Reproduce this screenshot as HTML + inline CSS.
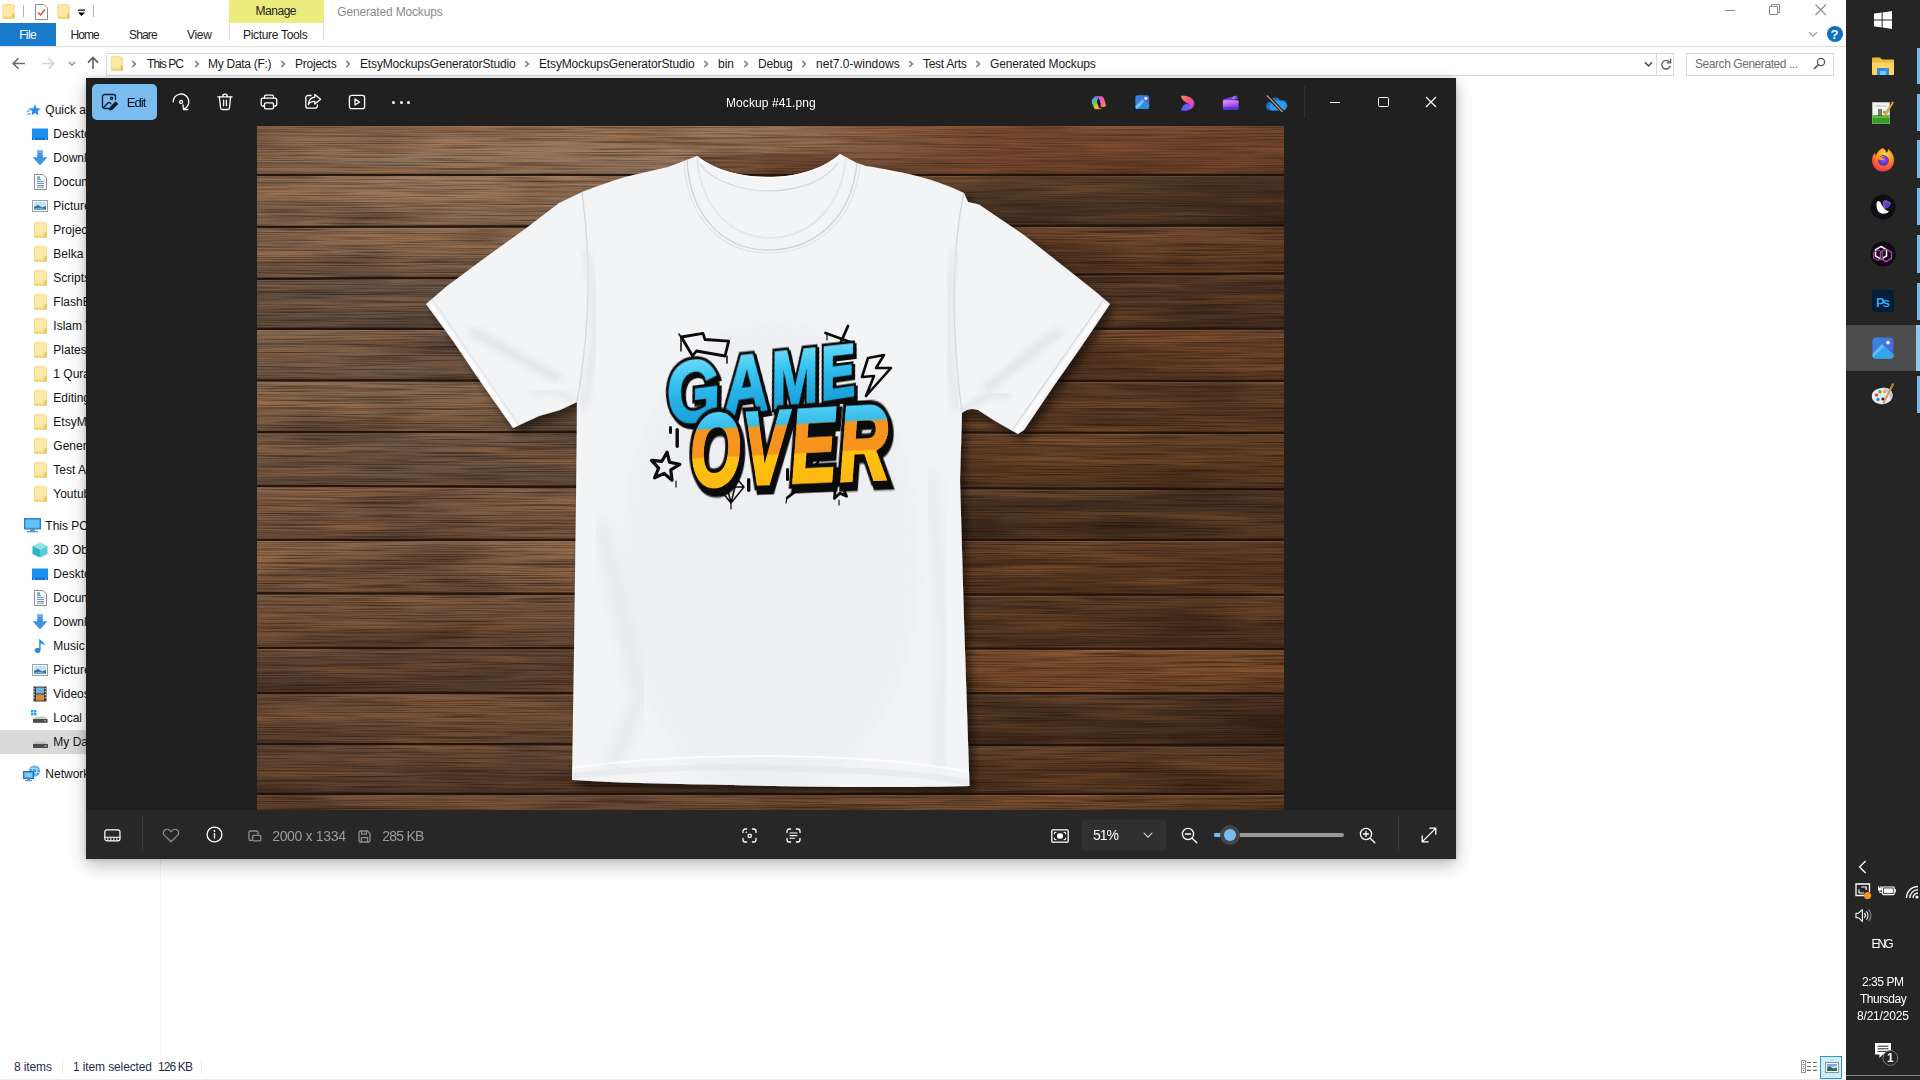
<!DOCTYPE html>
<html><head><meta charset="utf-8"><title>Mockup #41.png</title><style>html,body{margin:0;padding:0;width:1920px;height:1080px;overflow:hidden;background:#fff;font-family:"Liberation Sans",sans-serif;font-size:12px}
.abs{position:absolute}
.t{position:absolute;white-space:pre;font-family:"Liberation Sans",sans-serif}
svg{overflow:visible}</style></head><body>
<div class="abs" style="left:0;top:0;width:1846px;height:1080px;background:#fff"></div>
<svg class="abs" style="left:2px;top:4px" width="14" height="15" viewBox="0 0 14 16"><path d="M0.5,1 L8.5,0.5 L12.5,1.5 L12.5,15.5 L0.5,15.5 Z" fill="#ffe9a6" stroke="#f0cf73" stroke-width="0.8"/><rect x="1" y="13.2" width="11" height="2" fill="#f6d67d"/><rect x="10.2" y="10.2" width="2.6" height="5.3" fill="#e9c462"/></svg>
<div class="abs" style="left:23px;top:5px;width:1px;height:12px;background:#b4b4b4"></div>
<svg class="abs" style="left:35px;top:4px" width="13" height="16" viewBox="0 0 13 16"><path d="M0.5,0.5 H9 L12.5,4 V15.5 H0.5 Z" fill="#fff" stroke="#8c8c8c"/><path d="M3,8.5 L5.5,11 L10,5.5" stroke="#d9532c" stroke-width="1.5" fill="none"/></svg>
<svg class="abs" style="left:57px;top:4px" width="14" height="15" viewBox="0 0 14 16"><path d="M0.5,1 L8.5,0.5 L12.5,1.5 L12.5,15.5 L0.5,15.5 Z" fill="#ffe9a6" stroke="#f0cf73" stroke-width="0.8"/><rect x="1" y="13.2" width="11" height="2" fill="#f6d67d"/><rect x="10.2" y="10.2" width="2.6" height="5.3" fill="#e9c462"/></svg>
<svg class="abs" style="left:77px;top:9px" width="9" height="8" viewBox="0 0 9 8"><rect x="1" y="0.5" width="7" height="1.2" fill="#000"/><path d="M1,3.5 H8 L4.5,7Z" fill="#000"/></svg>
<div class="abs" style="left:93px;top:5px;width:1px;height:12px;background:#b4b4b4"></div>
<div class="abs" style="left:229px;top:0;width:95px;height:23px;background:#ecec7e"></div>
<div class="abs" style="left:229px;top:23px;width:1px;height:18px;background:#dadada"></div><div class="abs" style="left:323px;top:23px;width:1px;height:18px;background:#dadada"></div>
<span class="t" style="left:255.6px;top:5.2px;font-size:12px;line-height:12px;color:#222;letter-spacing:-0.493px;">Manage</span>
<span class="t" style="left:337.3px;top:5.5px;font-size:12px;line-height:12px;color:#8b8b8b;letter-spacing:-0.166px;">Generated Mockups</span>
<div class="abs" style="left:0;top:23px;width:56px;height:23px;background:#1979ca"></div>
<span class="t" style="left:19.2px;top:28.8px;font-size:12px;line-height:12px;color:#fff;letter-spacing:-0.645px;">File</span>
<span class="t" style="left:70.5px;top:28.8px;font-size:12px;line-height:12px;color:#222;letter-spacing:-0.937px;">Home</span>
<span class="t" style="left:129.0px;top:28.8px;font-size:12px;line-height:12px;color:#222;letter-spacing:-0.855px;">Share</span>
<span class="t" style="left:187.0px;top:28.8px;font-size:12px;line-height:12px;color:#222;letter-spacing:-0.331px;">View</span>
<span class="t" style="left:243.0px;top:28.8px;font-size:12px;line-height:12px;color:#222;letter-spacing:-0.315px;">Picture Tools</span>
<div class="abs" style="left:0;top:46px;width:1846px;height:1px;background:#dadbdc"></div>
<div class="abs" style="left:1725px;top:10px;width:10px;height:1px;background:#8a8a8a"></div>
<svg class="abs" style="left:1769px;top:4px" width="12" height="12" viewBox="0 0 12 12"><path d="M0.5,2.5 H8.5 V10.5 H0.5Z M2.5,2.5 V0.5 H10.5 V8.5 H8.5" stroke="#8a8a8a" fill="none"/></svg>
<svg class="abs" style="left:1815px;top:4px" width="12" height="12" viewBox="0 0 12 12"><path d="M0.5,0.5 L11,11 M11,0.5 L0.5,11" stroke="#8a8a8a" stroke-width="1.1" fill="none"/></svg>
<svg class="abs" style="left:1808px;top:31px" width="10" height="7" viewBox="0 0 10 7"><path d="M1,1.2 L5,5.2 L9,1.2" stroke="#9a9a9a" stroke-width="1.2" fill="none"/></svg>
<div class="abs" style="left:1826.5px;top:26px;width:16px;height:16px;border-radius:8px;background:#0f6fc6"></div>
<span class="t" style="left:1830.6px;top:27.6px;font-size:13px;line-height:13px;color:#fff;letter-spacing:0.000px;font-weight:bold;">?</span>
<svg class="abs" style="left:12px;top:57px" width="14" height="13" viewBox="0 0 14 13"><path d="M13,6.5 H1.5 M6.5,1.2 L1.2,6.5 L6.5,11.8" stroke="#6a6a6a" stroke-width="1.6" fill="none"/></svg>
<svg class="abs" style="left:41px;top:57px" width="14" height="13" viewBox="0 0 14 13"><path d="M1,6.5 H12.5 M7.5,1.2 L12.8,6.5 L7.5,11.8" stroke="#d4d4d4" stroke-width="1.6" fill="none"/></svg>
<svg class="abs" style="left:68px;top:61px" width="8" height="6" viewBox="0 0 8 6"><path d="M1,1 L4,4.2 L7,1" stroke="#8a8a8a" stroke-width="1.3" fill="none"/></svg>
<svg class="abs" style="left:87px;top:56px" width="12" height="14" viewBox="0 0 12 14"><path d="M6,13 V1.8 M1,6.6 L6,1.4 L11,6.6" stroke="#5e5e5e" stroke-width="1.6" fill="none"/></svg>
<div class="abs" style="left:106px;top:53px;width:1566px;height:21px;border:1px solid #d9d9d9;background:#fff"></div>
<svg class="abs" style="left:111px;top:56px" width="13" height="15" viewBox="0 0 14 16"><path d="M0.5,1 L8.5,0.5 L12.5,1.5 L12.5,15.5 L0.5,15.5 Z" fill="#ffe9a6" stroke="#f0cf73" stroke-width="0.8"/><rect x="1" y="13.2" width="11" height="2" fill="#f6d67d"/><rect x="10.2" y="10.2" width="2.6" height="5.3" fill="#e9c462"/></svg>
<span class="t" style="left:147.0px;top:57.8px;font-size:12px;line-height:12px;color:#1a1a1a;letter-spacing:-0.946px;">This PC</span>
<span class="t" style="left:208.0px;top:57.8px;font-size:12px;line-height:12px;color:#1a1a1a;letter-spacing:-0.279px;">My Data (F:)</span>
<span class="t" style="left:295.0px;top:57.8px;font-size:12px;line-height:12px;color:#1a1a1a;letter-spacing:-0.235px;">Projects</span>
<span class="t" style="left:360.0px;top:57.8px;font-size:12px;line-height:12px;color:#1a1a1a;letter-spacing:-0.148px;">EtsyMockupsGeneratorStudio</span>
<span class="t" style="left:539.0px;top:57.8px;font-size:12px;line-height:12px;color:#1a1a1a;letter-spacing:-0.148px;">EtsyMockupsGeneratorStudio</span>
<span class="t" style="left:718.0px;top:57.8px;font-size:12px;line-height:12px;color:#1a1a1a;letter-spacing:-0.007px;">bin</span>
<span class="t" style="left:758.0px;top:57.8px;font-size:12px;line-height:12px;color:#1a1a1a;letter-spacing:-0.165px;">Debug</span>
<span class="t" style="left:816.0px;top:57.8px;font-size:12px;line-height:12px;color:#1a1a1a;letter-spacing:0.025px;">net7.0-windows</span>
<span class="t" style="left:923.0px;top:57.8px;font-size:12px;line-height:12px;color:#1a1a1a;letter-spacing:-0.289px;">Test Arts</span>
<span class="t" style="left:990.0px;top:57.8px;font-size:12px;line-height:12px;color:#1a1a1a;letter-spacing:-0.147px;">Generated Mockups</span>
<svg class="abs" style="left:131px;top:60.3px" width="6" height="8" viewBox="0 0 6 8"><path d="M1.3,1 L4.5,4 L1.3,7" stroke="#6e6e6e" stroke-width="1.3" fill="none"/></svg>
<svg class="abs" style="left:193.7px;top:60.3px" width="6" height="8" viewBox="0 0 6 8"><path d="M1.3,1 L4.5,4 L1.3,7" stroke="#6e6e6e" stroke-width="1.3" fill="none"/></svg>
<svg class="abs" style="left:280px;top:60.3px" width="6" height="8" viewBox="0 0 6 8"><path d="M1.3,1 L4.5,4 L1.3,7" stroke="#6e6e6e" stroke-width="1.3" fill="none"/></svg>
<svg class="abs" style="left:345px;top:60.3px" width="6" height="8" viewBox="0 0 6 8"><path d="M1.3,1 L4.5,4 L1.3,7" stroke="#6e6e6e" stroke-width="1.3" fill="none"/></svg>
<svg class="abs" style="left:524px;top:60.3px" width="6" height="8" viewBox="0 0 6 8"><path d="M1.3,1 L4.5,4 L1.3,7" stroke="#6e6e6e" stroke-width="1.3" fill="none"/></svg>
<svg class="abs" style="left:703px;top:60.3px" width="6" height="8" viewBox="0 0 6 8"><path d="M1.3,1 L4.5,4 L1.3,7" stroke="#6e6e6e" stroke-width="1.3" fill="none"/></svg>
<svg class="abs" style="left:743px;top:60.3px" width="6" height="8" viewBox="0 0 6 8"><path d="M1.3,1 L4.5,4 L1.3,7" stroke="#6e6e6e" stroke-width="1.3" fill="none"/></svg>
<svg class="abs" style="left:801px;top:60.3px" width="6" height="8" viewBox="0 0 6 8"><path d="M1.3,1 L4.5,4 L1.3,7" stroke="#6e6e6e" stroke-width="1.3" fill="none"/></svg>
<svg class="abs" style="left:908px;top:60.3px" width="6" height="8" viewBox="0 0 6 8"><path d="M1.3,1 L4.5,4 L1.3,7" stroke="#6e6e6e" stroke-width="1.3" fill="none"/></svg>
<svg class="abs" style="left:975px;top:60.3px" width="6" height="8" viewBox="0 0 6 8"><path d="M1.3,1 L4.5,4 L1.3,7" stroke="#6e6e6e" stroke-width="1.3" fill="none"/></svg>
<svg class="abs" style="left:1644px;top:61px" width="9" height="7" viewBox="0 0 9 7"><path d="M1,1.2 L4.5,5 L8,1.2" stroke="#4a4a4a" stroke-width="1.5" fill="none"/></svg>
<div class="abs" style="left:1656px;top:54px;width:1px;height:21px;background:#d9d9d9"></div>
<svg class="abs" style="left:1660px;top:58px" width="12" height="13" viewBox="0 0 12 13"><path d="M9.6,4.2 A4.3,4.3 0 1 0 10.3,7.6" stroke="#5a5a5a" stroke-width="1.3" fill="none"/><path d="M10.6,0.8 V4.8 H6.6" stroke="#5a5a5a" stroke-width="1.3" fill="none"/></svg>
<div class="abs" style="left:1686px;top:53px;width:146px;height:21px;border:1px solid #d9d9d9;background:#fff"></div>
<span class="t" style="left:1695.0px;top:57.8px;font-size:12px;line-height:12px;color:#707070;letter-spacing:-0.442px;">Search Generated ...</span>
<svg class="abs" style="left:1813px;top:57px" width="13" height="13" viewBox="0 0 13 13"><circle cx="8" cy="5" r="3.6" stroke="#555" stroke-width="1.3" fill="none"/><path d="M5.4,7.6 L1,12" stroke="#555" stroke-width="1.6"/></svg>
<div class="abs" style="left:0;top:730px;width:160px;height:24px;background:#d9d9d9"></div>
<span class="t" style="left:45.3px;top:104.0px;font-size:12px;line-height:12px;color:#111;letter-spacing:0.000px;">Quick access</span>
<svg class="abs" style="left:26px;top:103.5px" width="15" height="13" viewBox="0 0 15 13"><path d="M9,0.3 L10.6,4.2 L14.8,4.5 L11.6,7.2 L12.6,11.4 L9,9.1 L5.4,11.4 L6.4,7.2 L3.2,4.5 L7.4,4.2 Z" fill="#2a8be4"/><path d="M0.5,8.2 L4.2,6.5 M1.2,11 L4.8,9 M2.2,5.2 L4.2,4.6" stroke="#55a7ee" stroke-width="1.1"/></svg>
<span class="t" style="left:53.3px;top:128.0px;font-size:12px;line-height:12px;color:#111;letter-spacing:0.000px;">Desktop</span>
<svg class="abs" style="left:32px;top:128px" width="16" height="13" viewBox="0 0 16 13"><rect x="0" y="0.5" width="16" height="11.5" fill="#1b8ff0"/><rect x="0" y="9.5" width="16" height="2.5" fill="#1274d0"/><rect x="1.5" y="10.3" width="1.2" height="1" fill="#dff"/><rect x="13.3" y="10.3" width="1.2" height="1" fill="#dff"/></svg>
<span class="t" style="left:53.3px;top:152.0px;font-size:12px;line-height:12px;color:#111;letter-spacing:0.000px;">Downloads</span>
<svg class="abs" style="left:32px;top:150px" width="16" height="16" viewBox="0 0 16 16"><path d="M5.3,0.5 H10.7 V7.2 H15.5 L8,15.5 L0.5,7.2 H5.3 Z" fill="#3f92e0"/><path d="M5.3,0.5 H10.7 V3 H5.3Z" fill="#6ab0ee"/></svg>
<span class="t" style="left:53.3px;top:176.0px;font-size:12px;line-height:12px;color:#111;letter-spacing:0.000px;">Documents</span>
<svg class="abs" style="left:34px;top:174px" width="13" height="16" viewBox="0 0 13 16"><path d="M0.5,0.5 H9 L12.5,4 V15.5 H0.5 Z" fill="#fff" stroke="#8c8c8c" stroke-width="1"/><path d="M3,5.5 H7 M3,7.5 H10 M3,9.5 H10 M3,11.5 H10 M3,13.2 H10" stroke="#5a86b8" stroke-width="0.9"/><rect x="3" y="2.5" width="3" height="2" fill="#4a8fd8"/></svg>
<span class="t" style="left:53.3px;top:200.0px;font-size:12px;line-height:12px;color:#111;letter-spacing:0.000px;">Pictures</span>
<svg class="abs" style="left:32px;top:200px" width="16" height="12" viewBox="0 0 16 12"><rect x="0.5" y="0.5" width="15" height="11" fill="#fff" stroke="#9aa0a6" stroke-width="1"/><rect x="2" y="2" width="12" height="8" fill="#bfe0f6"/><path d="M2,7 L6,5 L10,7.5 L14,6 V10 H2Z" fill="#2f6f9f"/><path d="M2,8.5 L7,7.5 L14,9 V10 H2Z" fill="#6aa6c8"/></svg>
<span class="t" style="left:53.3px;top:224.0px;font-size:12px;line-height:12px;color:#111;letter-spacing:0.000px;">Projects</span>
<svg class="abs" style="left:34px;top:222px" width="14" height="16" viewBox="0 0 14 16"><path d="M0.5,1 L8.5,0.5 L12.5,1.5 L12.5,15.5 L0.5,15.5 Z" fill="#ffe9a6" stroke="#f0cf73" stroke-width="0.8"/><rect x="1" y="13.2" width="11" height="2" fill="#f6d67d"/><rect x="10.2" y="10.2" width="2.6" height="5.3" fill="#e9c462"/></svg>
<span class="t" style="left:53.3px;top:248.0px;font-size:12px;line-height:12px;color:#111;letter-spacing:0.000px;">Belka Studio</span>
<svg class="abs" style="left:34px;top:246px" width="14" height="16" viewBox="0 0 14 16"><path d="M0.5,1 L8.5,0.5 L12.5,1.5 L12.5,15.5 L0.5,15.5 Z" fill="#ffe9a6" stroke="#f0cf73" stroke-width="0.8"/><rect x="1" y="13.2" width="11" height="2" fill="#f6d67d"/><rect x="10.2" y="10.2" width="2.6" height="5.3" fill="#e9c462"/></svg>
<span class="t" style="left:53.3px;top:272.0px;font-size:12px;line-height:12px;color:#111;letter-spacing:0.000px;">Scripts</span>
<svg class="abs" style="left:34px;top:270px" width="14" height="16" viewBox="0 0 14 16"><path d="M0.5,1 L8.5,0.5 L12.5,1.5 L12.5,15.5 L0.5,15.5 Z" fill="#ffe9a6" stroke="#f0cf73" stroke-width="0.8"/><rect x="1" y="13.2" width="11" height="2" fill="#f6d67d"/><rect x="10.2" y="10.2" width="2.6" height="5.3" fill="#e9c462"/></svg>
<span class="t" style="left:53.3px;top:296.0px;font-size:12px;line-height:12px;color:#111;letter-spacing:0.000px;">FlashBack</span>
<svg class="abs" style="left:34px;top:294px" width="14" height="16" viewBox="0 0 14 16"><path d="M0.5,1 L8.5,0.5 L12.5,1.5 L12.5,15.5 L0.5,15.5 Z" fill="#ffe9a6" stroke="#f0cf73" stroke-width="0.8"/><rect x="1" y="13.2" width="11" height="2" fill="#f6d67d"/><rect x="10.2" y="10.2" width="2.6" height="5.3" fill="#e9c462"/></svg>
<span class="t" style="left:53.3px;top:320.0px;font-size:12px;line-height:12px;color:#111;letter-spacing:0.000px;">Islam Videos</span>
<svg class="abs" style="left:34px;top:318px" width="14" height="16" viewBox="0 0 14 16"><path d="M0.5,1 L8.5,0.5 L12.5,1.5 L12.5,15.5 L0.5,15.5 Z" fill="#ffe9a6" stroke="#f0cf73" stroke-width="0.8"/><rect x="1" y="13.2" width="11" height="2" fill="#f6d67d"/><rect x="10.2" y="10.2" width="2.6" height="5.3" fill="#e9c462"/></svg>
<span class="t" style="left:53.3px;top:344.0px;font-size:12px;line-height:12px;color:#111;letter-spacing:0.000px;">Platesizer</span>
<svg class="abs" style="left:34px;top:342px" width="14" height="16" viewBox="0 0 14 16"><path d="M0.5,1 L8.5,0.5 L12.5,1.5 L12.5,15.5 L0.5,15.5 Z" fill="#ffe9a6" stroke="#f0cf73" stroke-width="0.8"/><rect x="1" y="13.2" width="11" height="2" fill="#f6d67d"/><rect x="10.2" y="10.2" width="2.6" height="5.3" fill="#e9c462"/></svg>
<span class="t" style="left:53.3px;top:368.0px;font-size:12px;line-height:12px;color:#111;letter-spacing:0.000px;">1 Quran</span>
<svg class="abs" style="left:34px;top:366px" width="14" height="16" viewBox="0 0 14 16"><path d="M0.5,1 L8.5,0.5 L12.5,1.5 L12.5,15.5 L0.5,15.5 Z" fill="#ffe9a6" stroke="#f0cf73" stroke-width="0.8"/><rect x="1" y="13.2" width="11" height="2" fill="#f6d67d"/><rect x="10.2" y="10.2" width="2.6" height="5.3" fill="#e9c462"/></svg>
<span class="t" style="left:53.3px;top:392.0px;font-size:12px;line-height:12px;color:#111;letter-spacing:0.000px;">Editing</span>
<svg class="abs" style="left:34px;top:390px" width="14" height="16" viewBox="0 0 14 16"><path d="M0.5,1 L8.5,0.5 L12.5,1.5 L12.5,15.5 L0.5,15.5 Z" fill="#ffe9a6" stroke="#f0cf73" stroke-width="0.8"/><rect x="1" y="13.2" width="11" height="2" fill="#f6d67d"/><rect x="10.2" y="10.2" width="2.6" height="5.3" fill="#e9c462"/></svg>
<span class="t" style="left:53.3px;top:416.0px;font-size:12px;line-height:12px;color:#111;letter-spacing:0.000px;">EtsyMockups</span>
<svg class="abs" style="left:34px;top:414px" width="14" height="16" viewBox="0 0 14 16"><path d="M0.5,1 L8.5,0.5 L12.5,1.5 L12.5,15.5 L0.5,15.5 Z" fill="#ffe9a6" stroke="#f0cf73" stroke-width="0.8"/><rect x="1" y="13.2" width="11" height="2" fill="#f6d67d"/><rect x="10.2" y="10.2" width="2.6" height="5.3" fill="#e9c462"/></svg>
<span class="t" style="left:53.3px;top:440.0px;font-size:12px;line-height:12px;color:#111;letter-spacing:0.000px;">Generated</span>
<svg class="abs" style="left:34px;top:438px" width="14" height="16" viewBox="0 0 14 16"><path d="M0.5,1 L8.5,0.5 L12.5,1.5 L12.5,15.5 L0.5,15.5 Z" fill="#ffe9a6" stroke="#f0cf73" stroke-width="0.8"/><rect x="1" y="13.2" width="11" height="2" fill="#f6d67d"/><rect x="10.2" y="10.2" width="2.6" height="5.3" fill="#e9c462"/></svg>
<span class="t" style="left:53.3px;top:464.0px;font-size:12px;line-height:12px;color:#111;letter-spacing:0.000px;">Test Arts</span>
<svg class="abs" style="left:34px;top:462px" width="14" height="16" viewBox="0 0 14 16"><path d="M0.5,1 L8.5,0.5 L12.5,1.5 L12.5,15.5 L0.5,15.5 Z" fill="#ffe9a6" stroke="#f0cf73" stroke-width="0.8"/><rect x="1" y="13.2" width="11" height="2" fill="#f6d67d"/><rect x="10.2" y="10.2" width="2.6" height="5.3" fill="#e9c462"/></svg>
<span class="t" style="left:53.3px;top:488.0px;font-size:12px;line-height:12px;color:#111;letter-spacing:0.000px;">Youtube</span>
<svg class="abs" style="left:34px;top:486px" width="14" height="16" viewBox="0 0 14 16"><path d="M0.5,1 L8.5,0.5 L12.5,1.5 L12.5,15.5 L0.5,15.5 Z" fill="#ffe9a6" stroke="#f0cf73" stroke-width="0.8"/><rect x="1" y="13.2" width="11" height="2" fill="#f6d67d"/><rect x="10.2" y="10.2" width="2.6" height="5.3" fill="#e9c462"/></svg>
<span class="t" style="left:45.3px;top:520.0px;font-size:12px;line-height:12px;color:#111;letter-spacing:0.000px;">This PC</span>
<svg class="abs" style="left:24px;top:518px" width="17" height="15" viewBox="0 0 17 15"><rect x="0.5" y="0.5" width="16" height="10.5" fill="#3aa0e6" stroke="#2f7fc0" stroke-width="1"/><rect x="1.8" y="1.8" width="13.4" height="7.9" fill="#5fc1f4"/><rect x="6" y="11" width="5" height="2" fill="#7e8a94"/><rect x="3" y="13" width="11" height="1.4" fill="#5d9bd0"/></svg>
<span class="t" style="left:53.3px;top:544.0px;font-size:12px;line-height:12px;color:#111;letter-spacing:0.000px;">3D Objects</span>
<svg class="abs" style="left:32px;top:542px" width="16" height="16" viewBox="0 0 16 16"><path d="M8,0.5 L15.5,4 L8,7.5 L0.5,4Z" fill="#8fe3e8"/><path d="M0.5,4 L8,7.5 V15.5 L0.5,12Z" fill="#2fb4c4"/><path d="M15.5,4 L8,7.5 V15.5 L15.5,12Z" fill="#58cbd6"/></svg>
<span class="t" style="left:53.3px;top:568.0px;font-size:12px;line-height:12px;color:#111;letter-spacing:0.000px;">Desktop</span>
<svg class="abs" style="left:32px;top:568px" width="16" height="13" viewBox="0 0 16 13"><rect x="0" y="0.5" width="16" height="11.5" fill="#1b8ff0"/><rect x="0" y="9.5" width="16" height="2.5" fill="#1274d0"/><rect x="1.5" y="10.3" width="1.2" height="1" fill="#dff"/><rect x="13.3" y="10.3" width="1.2" height="1" fill="#dff"/></svg>
<span class="t" style="left:53.3px;top:592.0px;font-size:12px;line-height:12px;color:#111;letter-spacing:0.000px;">Documents</span>
<svg class="abs" style="left:34px;top:590px" width="13" height="16" viewBox="0 0 13 16"><path d="M0.5,0.5 H9 L12.5,4 V15.5 H0.5 Z" fill="#fff" stroke="#8c8c8c" stroke-width="1"/><path d="M3,5.5 H7 M3,7.5 H10 M3,9.5 H10 M3,11.5 H10 M3,13.2 H10" stroke="#5a86b8" stroke-width="0.9"/><rect x="3" y="2.5" width="3" height="2" fill="#4a8fd8"/></svg>
<span class="t" style="left:53.3px;top:616.0px;font-size:12px;line-height:12px;color:#111;letter-spacing:0.000px;">Downloads</span>
<svg class="abs" style="left:32px;top:614px" width="16" height="16" viewBox="0 0 16 16"><path d="M5.3,0.5 H10.7 V7.2 H15.5 L8,15.5 L0.5,7.2 H5.3 Z" fill="#3f92e0"/><path d="M5.3,0.5 H10.7 V3 H5.3Z" fill="#6ab0ee"/></svg>
<span class="t" style="left:53.3px;top:640.0px;font-size:12px;line-height:12px;color:#111;letter-spacing:0.000px;">Music</span>
<svg class="abs" style="left:34px;top:638px" width="12" height="16" viewBox="0 0 12 16"><path d="M5.2,0.5 C7,3 10.5,3.8 10.8,8 C10,6.2 8,5.6 6.6,5.4 V12.5 A3,2.6 0 1 1 5.2,10.2 Z" fill="#1e8fe4"/></svg>
<span class="t" style="left:53.3px;top:664.0px;font-size:12px;line-height:12px;color:#111;letter-spacing:0.000px;">Pictures</span>
<svg class="abs" style="left:32px;top:664px" width="16" height="12" viewBox="0 0 16 12"><rect x="0.5" y="0.5" width="15" height="11" fill="#fff" stroke="#9aa0a6" stroke-width="1"/><rect x="2" y="2" width="12" height="8" fill="#bfe0f6"/><path d="M2,7 L6,5 L10,7.5 L14,6 V10 H2Z" fill="#2f6f9f"/><path d="M2,8.5 L7,7.5 L14,9 V10 H2Z" fill="#6aa6c8"/></svg>
<span class="t" style="left:53.3px;top:688.0px;font-size:12px;line-height:12px;color:#111;letter-spacing:0.000px;">Videos</span>
<svg class="abs" style="left:33px;top:686px" width="14" height="16" viewBox="0 0 14 16"><rect x="0.5" y="0.5" width="13" height="15" fill="#3b3b3b"/><rect x="3" y="1.5" width="8" height="6" fill="#6fb2e0"/><rect x="3" y="8.5" width="8" height="6" fill="#d9893f"/><path d="M1.2,2 v1.3 M1.2,5 v1.3 M1.2,8 v1.3 M1.2,11 v1.3 M12.3,2 v1.3 M12.3,5 v1.3 M12.3,8 v1.3 M12.3,11 v1.3" stroke="#ddd" stroke-width="1.1"/></svg>
<span class="t" style="left:53.3px;top:712.0px;font-size:12px;line-height:12px;color:#111;letter-spacing:0.000px;">Local Disk (C:)</span>
<svg class="abs" style="left:31px;top:710px" width="17" height="14" viewBox="0 0 17 14"><rect x="0" y="0" width="2.4" height="2.4" fill="#1ba1e8"/><rect x="3" y="0" width="2.4" height="2.4" fill="#1ba1e8"/><rect x="0" y="3" width="2.4" height="2.4" fill="#1ba1e8"/><rect x="3" y="3" width="2.4" height="2.4" fill="#1ba1e8"/><path d="M2,9 L5,6.5 H14 L16.5,9 V12.5 H2Z" fill="#c8c8c8"/><rect x="2" y="9" width="14.5" height="3.8" fill="#4b4b4b"/><rect x="13" y="10.3" width="2" height="1" fill="#6cf06c"/></svg>
<span class="t" style="left:53.3px;top:736.0px;font-size:12px;line-height:12px;color:#111;letter-spacing:0.000px;">My Data (F:)</span>
<svg class="abs" style="left:32px;top:741px" width="17" height="8" viewBox="0 0 17 8"><path d="M1,3 L3.5,0.8 H13.5 L16,3 Z" fill="#bdbdbd"/><rect x="1" y="3" width="15" height="4" fill="#4b4b4b"/><rect x="12.5" y="4.4" width="2" height="1" fill="#e8e8e8"/></svg>
<span class="t" style="left:45.3px;top:768.0px;font-size:12px;line-height:12px;color:#111;letter-spacing:0.000px;">Network</span>
<svg class="abs" style="left:23px;top:765px" width="18" height="17" viewBox="0 0 18 17"><circle cx="11.5" cy="6" r="5.6" fill="#4aa3e6"/><path d="M6.5,4 C9,2 13,5 16.8,4.2 M6.3,7.5 C10,9 14,6.5 17,8" stroke="#bfe3fa" stroke-width="1" fill="none"/><path d="M11.5,0.5 C8.5,3 8.5,9 11.5,11.5 M11.5,0.5 C14.5,3 14.5,9 11.5,11.5" stroke="#bfe3fa" stroke-width="0.9" fill="none"/><rect x="0.5" y="6.5" width="10" height="7" fill="#3c9be2" stroke="#2a6fb0" stroke-width="1"/><rect x="1.8" y="7.8" width="7.4" height="4.4" fill="#7fcaf6"/><rect x="4" y="13.5" width="3" height="1.5" fill="#7e8a94"/><rect x="2" y="15" width="7" height="1.2" fill="#5d9bd0"/></svg>
<div class="abs" style="left:160px;top:80px;width:1px;height:975px;background:#f0f0f0"></div>
<span class="t" style="left:14.0px;top:1060.8px;font-size:12px;line-height:12px;color:#1f2d4d;letter-spacing:-0.113px;">8 items</span>
<div class="abs" style="left:62px;top:1060px;width:1px;height:14px;background:#eeeeee"></div>
<span class="t" style="left:73.0px;top:1060.8px;font-size:12px;line-height:12px;color:#1f2d4d;letter-spacing:-0.122px;">1 item selected</span>
<span class="t" style="left:158.0px;top:1060.8px;font-size:12px;line-height:12px;color:#1f2d4d;letter-spacing:-0.873px;">126 KB</span>
<div class="abs" style="left:201px;top:1060px;width:1px;height:14px;background:#eeeeee"></div>
<svg class="abs" style="left:1801px;top:1060px" width="17" height="13" viewBox="0 0 17 13"><rect x="0.5" y="0.5" width="4" height="12" fill="#fff" stroke="#8a8a8a" stroke-width="0.9"/><path d="M0.5,4.5 H4.5 M0.5,8.5 H4.5" stroke="#8a8a8a" stroke-width="0.8"/><rect x="2" y="2" width="1" height="1" fill="#666"/><rect x="2" y="6" width="1" height="1" fill="#666"/><rect x="2" y="10" width="1" height="1" fill="#666"/><path d="M6,2.5 h3.8 M12,2.5 h3.8 M6,6.5 h3.8 M12,6.5 h3.8 M6,10.4 h3.8 M12,10.4 h3.8" stroke="#6a6a6a" stroke-width="1.1"/></svg>
<div class="abs" style="left:1820px;top:1056px;width:22px;height:23px;box-sizing:border-box;border:1px solid #3f90c6;background:#c9effc"></div>
<svg class="abs" style="left:1825px;top:1062px" width="14" height="11" viewBox="0 0 14 11"><rect x="0.5" y="0.5" width="13" height="10" fill="#fff" stroke="#8a8a8a" stroke-width="0.9"/><rect x="2" y="2" width="10" height="7" fill="#7fa8ee"/><path d="M2,6 L5,4.6 L8.5,6.5 L12,4.4 V9 H2Z" fill="#2f6b4a"/><path d="M6,5 L12,3.8 V5.5 L8.5,6.6Z" fill="#d5e6f5"/></svg>
<div class="abs" style="left:0;top:1078.5px;width:1846px;height:1.5px;background:#ececec"></div>
<div class="abs" style="left:0;top:0;width:1920px;height:1080px;will-change:transform">
<div class="abs" style="left:86px;top:78px;width:1370px;height:781px;background:#202020;box-shadow:0 6px 16px rgba(0,0,0,0.27),0 0 5px rgba(0,0,0,0.16)"></div>
<div class="abs" style="left:86px;top:810px;width:1370px;height:49px;background:#272727"></div>
<svg class="abs" style="left:257px;top:126px" width="1027" height="684" viewBox="257 126 1027 684">
<defs>
<filter id="grain" x="0" y="0" width="100%" height="100%" color-interpolation-filters="sRGB"><feTurbulence type="fractalNoise" baseFrequency="0.004 0.35" numOctaves="3" seed="7" result="n"/><feColorMatrix type="matrix" values="0 0 0 0 0.14  0 0 0 0 0.07  0 0 0 0 0.03  1.8 0 0 0 -0.8"/></filter>
<filter id="grain2" x="0" y="0" width="100%" height="100%" color-interpolation-filters="sRGB"><feTurbulence type="fractalNoise" baseFrequency="0.006 0.09" numOctaves="2" seed="23"/><feColorMatrix type="matrix" values="0 0 0 0 0.78  0 0 0 0 0.50  0 0 0 0 0.28  0 1.9 0 0 -0.85"/></filter>
<filter id="grain3" x="0" y="0" width="100%" height="100%" color-interpolation-filters="sRGB"><feTurbulence type="fractalNoise" baseFrequency="0.012 0.9" numOctaves="2" seed="11"/><feColorMatrix type="matrix" values="0 0 0 0 0.10  0 0 0 0 0.05  0 0 0 0 0.02  0 0 2.4 0 -1.05"/></filter>
<filter id="blotch" x="0" y="0" width="100%" height="100%" color-interpolation-filters="sRGB"><feTurbulence type="fractalNoise" baseFrequency="0.006 0.02" numOctaves="3" seed="5"/><feColorMatrix type="matrix" values="0 0 0 0 0.10  0 0 0 0 0.05  0 0 0 0 0.03  2.6 0 0 0 -1.25"/></filter>
<linearGradient id="redR" x1="0" x2="1" y1="0" y2="0"><stop offset="0" stop-color="#3a1200" stop-opacity="0"/><stop offset="0.45" stop-color="#3a1200" stop-opacity="0.04"/><stop offset="0.7" stop-color="#3c1400" stop-opacity="0.3"/><stop offset="1" stop-color="#2a0c00" stop-opacity="0.5"/></linearGradient>
<linearGradient id="topwarm" x1="0" x2="0" y1="0" y2="1"><stop offset="0" stop-color="#b06a35" stop-opacity="0.22"/><stop offset="0.2" stop-color="#b06a35" stop-opacity="0"/></linearGradient>
<radialGradient id="vig" cx="0.5" cy="0.5" r="0.75"><stop offset="0.7" stop-color="#000" stop-opacity="0"/><stop offset="1" stop-color="#000" stop-opacity="0.14"/></radialGradient>
<linearGradient id="plankshade" x1="0" x2="0" y1="0" y2="1"><stop offset="0" stop-color="#fff" stop-opacity="0.05"/><stop offset="0.5" stop-color="#000" stop-opacity="0"/><stop offset="1" stop-color="#000" stop-opacity="0.16"/></linearGradient>
<linearGradient id="cy" gradientUnits="userSpaceOnUse" x1="0" x2="0" y1="216" y2="268"><stop offset="0" stop-color="#6ad8f7"/><stop offset="0.3" stop-color="#39c6f2"/><stop offset="0.6" stop-color="#27b3e6"/><stop offset="1" stop-color="#1b9fd8"/></linearGradient>
<linearGradient id="or" gradientUnits="userSpaceOnUse" x1="0" x2="0" y1="254" y2="303"><stop offset="0" stop-color="#4fcdf4"/><stop offset="0.2" stop-color="#36bdec"/><stop offset="0.24" stop-color="#f7941d"/><stop offset="0.6" stop-color="#f7941d"/><stop offset="0.62" stop-color="#ffc20e"/><stop offset="1" stop-color="#fdb813"/></linearGradient>
<filter id="shsh" x="-10%" y="-10%" width="125%" height="125%"><feGaussianBlur in="SourceAlpha" stdDeviation="5"/><feOffset dx="5" dy="6"/><feComponentTransfer><feFuncA type="linear" slope="0.55"/></feComponentTransfer><feMerge><feMergeNode/><feMergeNode in="SourceGraphic"/></feMerge></filter>
<filter id="blur6"><feGaussianBlur stdDeviation="6"/></filter>
<filter id="blur3"><feGaussianBlur stdDeviation="3"/></filter>
<filter id="blur1"><feGaussianBlur stdDeviation="0.8"/></filter>
<clipPath id="shirtclip"><path d="M697,156 C716,171 742,177 768,177 C795,177 822,170 840,154 L857,163 L866,166 C885,169 900,172 909,174 C930,179 950,186 964,193 L968,202 L979,204.5 L1024,235 L1067,269 L1096,292 L1110,304 L1081,347 L1053,387 L1024,430 L1018,434 L995,421 L978,410 C972,408 966,409 962,413 L960,480 L964,620 L969.5,786 C900,788 800,787 733,785 C680,784 620,783 572,780 L574,650 L576,500 L577,402 L560,410 L539,416 L513,428 L482,384 L453,341 L426,304 L447,286 L482,260 L525,229 L559,203 L582,192 C600,185 612,181 625,177 C640,173 655,170 668,167 Z"/></clipPath>
</defs>
<rect x="257" y="126" width="1027" height="684" fill="#6b4b36"/>
<linearGradient id="pg0" x1="257" x2="1284" y1="0" y2="0" gradientUnits="userSpaceOnUse"><stop offset="0" stop-color="#9c8370"/><stop offset="0.42" stop-color="#9c8370"/><stop offset="0.72" stop-color="#734833"/><stop offset="1" stop-color="#734833"/></linearGradient>
<polygon points="257,126 1284,126 1284,175 257,175" fill="url(#pg0)"/>
<polygon points="257,126 1284,126 1284,175 257,175" fill="url(#plankshade)"/>
<linearGradient id="pg1" x1="257" x2="1284" y1="0" y2="0" gradientUnits="userSpaceOnUse"><stop offset="0" stop-color="#977a63"/><stop offset="0.42" stop-color="#977a63"/><stop offset="0.72" stop-color="#413427"/><stop offset="1" stop-color="#413427"/></linearGradient>
<polygon points="257,175 1284,175 1284,225.6 257,227" fill="url(#pg1)"/>
<polygon points="257,175 1284,175 1284,225.6 257,227" fill="url(#plankshade)"/>
<linearGradient id="pg2" x1="257" x2="1284" y1="0" y2="0" gradientUnits="userSpaceOnUse"><stop offset="0" stop-color="#8b6d56"/><stop offset="0.42" stop-color="#8b6d56"/><stop offset="0.72" stop-color="#6a452d"/><stop offset="1" stop-color="#6a452d"/></linearGradient>
<polygon points="257,227 1284,225.6 1284,273.6 257,279" fill="url(#pg2)"/>
<polygon points="257,227 1284,225.6 1284,273.6 257,279" fill="url(#plankshade)"/>
<linearGradient id="pg3" x1="257" x2="1284" y1="0" y2="0" gradientUnits="userSpaceOnUse"><stop offset="0" stop-color="#6a574a"/><stop offset="0.42" stop-color="#6a574a"/><stop offset="0.72" stop-color="#543a28"/><stop offset="1" stop-color="#543a28"/></linearGradient>
<polygon points="257,279 1284,273.6 1284,328.7 257,329" fill="url(#pg3)"/>
<polygon points="257,279 1284,273.6 1284,328.7 257,329" fill="url(#plankshade)"/>
<linearGradient id="pg4" x1="257" x2="1284" y1="0" y2="0" gradientUnits="userSpaceOnUse"><stop offset="0" stop-color="#7f634e"/><stop offset="0.42" stop-color="#7f634e"/><stop offset="0.72" stop-color="#70472c"/><stop offset="1" stop-color="#70472c"/></linearGradient>
<polygon points="257,329 1284,328.7 1284,381 257,380.5" fill="url(#pg4)"/>
<polygon points="257,329 1284,328.7 1284,381 257,380.5" fill="url(#plankshade)"/>
<linearGradient id="pg5" x1="257" x2="1284" y1="0" y2="0" gradientUnits="userSpaceOnUse"><stop offset="0" stop-color="#876950"/><stop offset="0.42" stop-color="#876950"/><stop offset="0.72" stop-color="#5f3f28"/><stop offset="1" stop-color="#5f3f28"/></linearGradient>
<polygon points="257,380.5 1284,381 1284,433 257,432" fill="url(#pg5)"/>
<polygon points="257,380.5 1284,381 1284,433 257,432" fill="url(#plankshade)"/>
<linearGradient id="pg6" x1="257" x2="1284" y1="0" y2="0" gradientUnits="userSpaceOnUse"><stop offset="0" stop-color="#735946"/><stop offset="0.42" stop-color="#735946"/><stop offset="0.72" stop-color="#674428"/><stop offset="1" stop-color="#674428"/></linearGradient>
<polygon points="257,432 1284,433 1284,489.4 257,486" fill="url(#pg6)"/>
<polygon points="257,432 1284,433 1284,489.4 257,486" fill="url(#plankshade)"/>
<linearGradient id="pg7" x1="257" x2="1284" y1="0" y2="0" gradientUnits="userSpaceOnUse"><stop offset="0" stop-color="#815f48"/><stop offset="0.42" stop-color="#815f48"/><stop offset="0.72" stop-color="#483524"/><stop offset="1" stop-color="#483524"/></linearGradient>
<polygon points="257,486 1284,489.4 1284,540 257,540" fill="url(#pg7)"/>
<polygon points="257,486 1284,489.4 1284,540 257,540" fill="url(#plankshade)"/>
<linearGradient id="pg8" x1="257" x2="1284" y1="0" y2="0" gradientUnits="userSpaceOnUse"><stop offset="0" stop-color="#87644a"/><stop offset="0.42" stop-color="#87644a"/><stop offset="0.72" stop-color="#603e26"/><stop offset="1" stop-color="#603e26"/></linearGradient>
<polygon points="257,540 1284,540 1284,595 257,593.5" fill="url(#pg8)"/>
<polygon points="257,540 1284,540 1284,595 257,593.5" fill="url(#plankshade)"/>
<linearGradient id="pg9" x1="257" x2="1284" y1="0" y2="0" gradientUnits="userSpaceOnUse"><stop offset="0" stop-color="#76553e"/><stop offset="0.42" stop-color="#76553e"/><stop offset="0.72" stop-color="#563a25"/><stop offset="1" stop-color="#563a25"/></linearGradient>
<polygon points="257,593.5 1284,595 1284,649 257,648" fill="url(#pg9)"/>
<polygon points="257,593.5 1284,595 1284,649 257,648" fill="url(#plankshade)"/>
<linearGradient id="pg10" x1="257" x2="1284" y1="0" y2="0" gradientUnits="userSpaceOnUse"><stop offset="0" stop-color="#604534"/><stop offset="0.42" stop-color="#604534"/><stop offset="0.72" stop-color="#825330"/><stop offset="1" stop-color="#825330"/></linearGradient>
<polygon points="257,648 1284,649 1284,693.5 257,693" fill="url(#pg10)"/>
<polygon points="257,648 1284,649 1284,693.5 257,693" fill="url(#plankshade)"/>
<linearGradient id="pg11" x1="257" x2="1284" y1="0" y2="0" gradientUnits="userSpaceOnUse"><stop offset="0" stop-color="#72513a"/><stop offset="0.42" stop-color="#72513a"/><stop offset="0.72" stop-color="#493322"/><stop offset="1" stop-color="#493322"/></linearGradient>
<polygon points="257,693 1284,693.5 1284,745.4 257,744" fill="url(#pg11)"/>
<polygon points="257,693 1284,693.5 1284,745.4 257,744" fill="url(#plankshade)"/>
<linearGradient id="pg12" x1="257" x2="1284" y1="0" y2="0" gradientUnits="userSpaceOnUse"><stop offset="0" stop-color="#664936"/><stop offset="0.42" stop-color="#664936"/><stop offset="0.72" stop-color="#634229"/><stop offset="1" stop-color="#634229"/></linearGradient>
<polygon points="257,744 1284,745.4 1284,794 257,794" fill="url(#pg12)"/>
<polygon points="257,744 1284,745.4 1284,794 257,794" fill="url(#plankshade)"/>
<linearGradient id="pg13" x1="257" x2="1284" y1="0" y2="0" gradientUnits="userSpaceOnUse"><stop offset="0" stop-color="#77543d"/><stop offset="0.42" stop-color="#77543d"/><stop offset="0.72" stop-color="#785131"/><stop offset="1" stop-color="#785131"/></linearGradient>
<polygon points="257,794 1284,794 1284,810 257,810" fill="url(#pg13)"/>
<polygon points="257,794 1284,794 1284,810 257,810" fill="url(#plankshade)"/>
<rect x="257" y="126" width="1027" height="684" filter="url(#grain)" opacity="0.36"/>
<rect x="257" y="126" width="1027" height="684" filter="url(#grain2)" opacity="0.4"/>
<rect x="257" y="126" width="1027" height="684" filter="url(#grain3)" opacity="0.55"/>
<rect x="257" y="126" width="1027" height="684" filter="url(#blotch)" opacity="0.3"/>
<rect x="257" y="126" width="1027" height="684" fill="url(#redR)" opacity="0.15"/>
<rect x="257" y="126" width="1027" height="684" fill="url(#topwarm)"/>
<polygon points="257,173.7 1284,173.7 1284,176.1 257,176.1" fill="#1c100a" opacity="0.9"/>
<polygon points="257,176.1 1284,176.1 1284,177.3 257,177.3" fill="#c89468" opacity="0.12"/>
<polygon points="257,225.7 1284,224.29999999999998 1284,226.7 257,228.1" fill="#1c100a" opacity="0.9"/>
<polygon points="257,228.1 1284,226.7 1284,227.9 257,229.3" fill="#c89468" opacity="0.12"/>
<polygon points="257,277.7 1284,272.3 1284,274.70000000000005 257,280.1" fill="#1c100a" opacity="0.9"/>
<polygon points="257,280.1 1284,274.70000000000005 1284,275.90000000000003 257,281.3" fill="#c89468" opacity="0.12"/>
<polygon points="257,327.7 1284,327.4 1284,329.8 257,330.1" fill="#1c100a" opacity="0.9"/>
<polygon points="257,330.1 1284,329.8 1284,331.0 257,331.3" fill="#c89468" opacity="0.12"/>
<polygon points="257,379.2 1284,379.7 1284,382.1 257,381.6" fill="#1c100a" opacity="0.9"/>
<polygon points="257,381.6 1284,382.1 1284,383.3 257,382.8" fill="#c89468" opacity="0.12"/>
<polygon points="257,430.7 1284,431.7 1284,434.1 257,433.1" fill="#1c100a" opacity="0.9"/>
<polygon points="257,433.1 1284,434.1 1284,435.3 257,434.3" fill="#c89468" opacity="0.12"/>
<polygon points="257,484.7 1284,488.09999999999997 1284,490.5 257,487.1" fill="#1c100a" opacity="0.9"/>
<polygon points="257,487.1 1284,490.5 1284,491.7 257,488.3" fill="#c89468" opacity="0.12"/>
<polygon points="257,538.7 1284,538.7 1284,541.1 257,541.1" fill="#1c100a" opacity="0.9"/>
<polygon points="257,541.1 1284,541.1 1284,542.3 257,542.3" fill="#c89468" opacity="0.12"/>
<polygon points="257,592.2 1284,593.7 1284,596.1 257,594.6" fill="#1c100a" opacity="0.9"/>
<polygon points="257,594.6 1284,596.1 1284,597.3 257,595.8" fill="#c89468" opacity="0.12"/>
<polygon points="257,646.7 1284,647.7 1284,650.1 257,649.1" fill="#1c100a" opacity="0.9"/>
<polygon points="257,649.1 1284,650.1 1284,651.3 257,650.3" fill="#c89468" opacity="0.12"/>
<polygon points="257,691.7 1284,692.2 1284,694.6 257,694.1" fill="#1c100a" opacity="0.9"/>
<polygon points="257,694.1 1284,694.6 1284,695.8 257,695.3" fill="#c89468" opacity="0.12"/>
<polygon points="257,742.7 1284,744.1 1284,746.5 257,745.1" fill="#1c100a" opacity="0.9"/>
<polygon points="257,745.1 1284,746.5 1284,747.6999999999999 257,746.3" fill="#c89468" opacity="0.12"/>
<polygon points="257,792.7 1284,792.7 1284,795.1 257,795.1" fill="#1c100a" opacity="0.9"/>
<polygon points="257,795.1 1284,795.1 1284,796.3 257,796.3" fill="#c89468" opacity="0.12"/>
<rect x="257" y="262" width="443" height="1.2" fill="#2a170d" opacity="0.35"/>
<rect x="900" y="262" width="384" height="1.2" fill="#2a170d" opacity="0.4"/>
<rect x="257" y="204" width="263" height="1.2" fill="#2a170d" opacity="0.15"/>
<rect x="257" y="408" width="303" height="1.2" fill="#2a170d" opacity="0.3"/>
<rect x="1000" y="408" width="284" height="1.2" fill="#2a170d" opacity="0.35"/>
<rect x="257" y="563" width="318" height="1.2" fill="#2a170d" opacity="0.35"/>
<rect x="968" y="563" width="316" height="1.2" fill="#2a170d" opacity="0.4"/>
<rect x="257" y="520" width="318" height="1.2" fill="#2a170d" opacity="0.3"/>
<rect x="968" y="620" width="316" height="1.2" fill="#2a170d" opacity="0.3"/>
<rect x="257" y="770" width="315" height="1.2" fill="#2a170d" opacity="0.2"/>
<rect x="968" y="770" width="316" height="1.2" fill="#2a170d" opacity="0.35"/>
<rect x="1020" y="304" width="264" height="1.2" fill="#2a170d" opacity="0.3"/>
<rect x="257" y="355" width="213" height="1.2" fill="#2a170d" opacity="0.25"/>
<rect x="257" y="458" width="318" height="1.2" fill="#2a170d" opacity="0.2"/>
<rect x="968" y="720" width="316" height="1.2" fill="#2a170d" opacity="0.25"/>
<rect x="257" y="126" width="1027" height="684" fill="url(#vig)"/>
<path d="M697,156 C716,171 742,177 768,177 C795,177 822,170 840,154 Z" fill="#3a1608" opacity="0.28"/>
<path d="M697,156 C716,171 742,177 768,177 C795,177 822,170 840,154 L857,163 L866,166 C885,169 900,172 909,174 C930,179 950,186 964,193 L968,202 L979,204.5 L1024,235 L1067,269 L1096,292 L1110,304 L1081,347 L1053,387 L1024,430 L1018,434 L995,421 L978,410 C972,408 966,409 962,413 L960,480 L964,620 L969.5,786 C900,788 800,787 733,785 C680,784 620,783 572,780 L574,650 L576,500 L577,402 L560,410 L539,416 L513,428 L482,384 L453,341 L426,304 L447,286 L482,260 L525,229 L559,203 L582,192 C600,185 612,181 625,177 C640,173 655,170 668,167 Z" fill="#f3f4f6" filter="url(#shsh)"/>
<g clip-path="url(#shirtclip)">
<ellipse cx="770" cy="560" rx="150" ry="240" fill="#e9ebef" opacity="0.55" filter="url(#blur6)"/>
<path d="M600,520 L640,700 L610,770" stroke="#dfe2e8" stroke-width="14" fill="none" opacity="0.6" filter="url(#blur6)"/>
<path d="M930,470 L945,640 L940,770" stroke="#e2e5ea" stroke-width="14" fill="none" opacity="0.6" filter="url(#blur6)"/>
<path d="M470,330 L560,380" stroke="#dcdfe5" stroke-width="10" fill="none" opacity="0.7" filter="url(#blur3)"/>
<path d="M1060,330 L985,390" stroke="#dcdfe5" stroke-width="10" fill="none" opacity="0.7" filter="url(#blur3)"/>
<path d="M582,192 C590,250 592,320 577,402" stroke="#d5d8de" stroke-width="1.4" fill="none"/>
<path d="M964,192 C952,250 950,320 962,413" stroke="#d5d8de" stroke-width="1.4" fill="none"/>
<path d="M697,156 C716,171 742,177 768,177 C795,177 822,170 840,154" stroke="#fbfbfc" stroke-width="3" fill="none"/>
<path d="M700,164 C712,182 745,191 768,191 C800,191 826,180 838,163" stroke="#cfd2d8" stroke-width="1.2" fill="none" opacity="0.9"/>
<path d="M697,156 C700,205 728,236 768,238 C812,238 842,205 846,157" stroke="#e4e6ea" stroke-width="2" fill="none"/>
<path d="M687,160 C690,215 722,250 768,250 C818,250 852,215 857,163" stroke="#c9ccd2" stroke-width="1.3" fill="none" opacity="0.9"/>
<path d="M684,161 C687,217 720,253 768,253 C820,253 855,217 860,164" stroke="#dfe1e6" stroke-width="1.2" fill="none" opacity="0.9"/>
<path d="M572,768 C640,758 720,756 770,756 C850,757 920,762 969,772" stroke="#fcfcfd" stroke-width="2" fill="none"/>
<path d="M572,776 C640,768 720,766 770,768 C850,770 920,772 969,783" stroke="#e6e8ec" stroke-width="6" fill="none" opacity="0.8"/>
<path d="M1104,299 L1013,429" stroke="#d4d7dd" stroke-width="1.3" fill="none"/>
<path d="M1107.5,301.5 L1016,432" stroke="#fdfdfe" stroke-width="3" fill="none"/>
<path d="M432,299 L519,425" stroke="#dfe2e7" stroke-width="1.2" fill="none"/>
<path d="M428.5,301.5 L515.5,427" stroke="#fdfdfe" stroke-width="3" fill="none"/>
<path d="M962,413 C975,400 990,392 1010,396" stroke="#d9dce2" stroke-width="5" fill="none" opacity="0.8" filter="url(#blur3)"/>
<path d="M577,402 C565,392 548,388 530,394" stroke="#dcdfe5" stroke-width="5" fill="none" opacity="0.7" filter="url(#blur3)"/>
<path d="M585,250 C600,300 596,360 582,410" stroke="#e3e5ea" stroke-width="9" fill="none" opacity="0.8" filter="url(#blur3)"/>
<path d="M957,250 C944,300 946,360 958,410" stroke="#e3e5ea" stroke-width="9" fill="none" opacity="0.8" filter="url(#blur3)"/>
</g>
<g stroke="#0b0b0b" fill="none" stroke-linejoin="round" stroke-linecap="round">
<path d="M681.3,337 L703,333.4 L705,339.5 L728.7,341.2 L725,356 L696.4,351 L692.6,356 Z" stroke-width="2.8"/>
<path d="M681,337 L681,351 M727,356 L727,363 M681,337 L679,334" stroke-width="1.5"/>
<path d="M825.5,333 L854,343.5 M848,326 L837,351" stroke-width="2.8"/>
<path d="M827,334 L827,340" stroke-width="1.2"/>
<path d="M868,358 L884,355 L876,368 L891,368 L866,396 L874,376 L862,377 Z" stroke-width="2.6" />
<path d="M812,462 L798,481 L808,480 L787,498 L816,476 L806,477 L818,462" stroke-width="2.6"/>
<polygon points="667.1,452.1 669.5,462.3 679.8,464.4 670.8,469.8 672.0,480.2 664.1,473.4 654.6,477.8 658.6,468.1 651.5,460.4 661.9,461.3" stroke-width="3.2"/>
<polygon points="837.2,478.7 840.9,485.0 848.3,484.1 843.4,489.6 846.6,496.3 839.8,493.3 834.4,498.4 835.1,491.1 828.6,487.5 835.8,485.9" stroke-width="2.8"/>
<path d="M718,487 L724,480 L738,480 L744,487 L731,503 Z M718,487 L744,487 M724,480 L727,487 L731,503 L735,487 L738,480 M727,487 L731,480 L735,487" stroke-width="1.5"/>
<path d="M731,503 L731,509 M676,481 L676,487 M787,498 L786,503 M839,500 L839,505" stroke-width="1.2"/>
</g>
<g fill="#0b0b0b"><rect x="675.5" y="428" width="3.4" height="20" rx="1.7"/><rect x="669" y="426" width="3" height="8" rx="1.5"/><rect x="786" y="468" width="3" height="13" rx="1.5"/><rect x="747" y="478" width="3.4" height="14" rx="1.7"/><rect x="878" y="425" width="3.2" height="22" rx="1.6"/><rect x="871" y="430" width="3" height="9" rx="1.5"/><rect x="820" y="470" width="3" height="10" rx="1.5"/></g>
</svg>
<div style="position:absolute;left:666.1px;top:356.9px;font:italic bold 76.5px 'Liberation Sans',sans-serif;line-height:76.5px;white-space:pre;letter-spacing:4px;transform-origin:0 50%;transform:rotate(-7.61deg) perspective(400px) rotateY(19.26deg) scaleY(1.152);color:#0b0b0b;-webkit-text-stroke:8px #0b0b0b;filter:drop-shadow(2.5px 3px 0 #0b0b0b)">GAME</div>
<div style="position:absolute;left:666.1px;top:356.9px;font:italic bold 76.5px 'Liberation Sans',sans-serif;line-height:76.5px;white-space:pre;letter-spacing:4px;transform-origin:0 50%;transform:rotate(-7.61deg) perspective(400px) rotateY(19.26deg) scaleY(1.152);color:transparent;-webkit-text-stroke:2.4px transparent;background:linear-gradient(#6ad8f7 13%,#39c6f2 34%,#27b3e6 56%,#1b9fd8 85%);-webkit-background-clip:text;background-clip:text">GAME</div>
<div style="position:absolute;left:690.3px;top:419.5px;font:italic bold 64.3px 'Liberation Sans',sans-serif;line-height:64.3px;white-space:pre;letter-spacing:3px;transform-origin:0 50%;transform:rotate(-2.92deg) perspective(400px) rotateY(-4.80deg) scaleY(1.580);color:#0b0b0b;-webkit-text-stroke:8px #0b0b0b;filter:drop-shadow(2.5px 3px 0 #0b0b0b)">OVER</div>
<div style="position:absolute;left:690.3px;top:419.5px;font:italic bold 64.3px 'Liberation Sans',sans-serif;line-height:64.3px;white-space:pre;letter-spacing:3px;transform-origin:0 50%;transform:rotate(-2.92deg) perspective(400px) rotateY(-4.80deg) scaleY(1.580);color:transparent;-webkit-text-stroke:2.4px transparent;background:linear-gradient(#4fcdf4 13%,#36bdec 27%,#f7941d 30%,#f7941d 56%,#ffc20e 57.5%,#fdb813 85%);-webkit-background-clip:text;background-clip:text">OVER</div>
<div class="abs" style="left:92px;top:84px;width:65px;height:36px;border-radius:5px;background:#79bcf0"></div>
<svg class="abs" style="left:101px;top:93px" width="19" height="18" viewBox="0 0 19 18" preserveAspectRatio="none"><g stroke="#0a1a30" fill="none" stroke-width="1.3" stroke-linejoin="round" stroke-linecap="round"><path d="M8,15.5 H3.5 A2,2 0 0 1 1.5,13.5 V3.5 A2,2 0 0 1 3.5,1.5 H12.5 A2,2 0 0 1 14.5,3.5 V6.5"/><path d="M2.5,14.5 L7.2,9.8 A1.2,1.2 0 0 1 8.8,9.8 L9.8,10.8"/><circle cx="10.6" cy="5.2" r="1.1"/></g><path d="M14.6,8.3 L17.2,10.9 L11.2,16.9 L8.2,17.5 L8.8,14.3 Z" fill="#0a1a30"/></svg>
<span class="t" style="left:126.7px;top:95.9px;font-size:13px;line-height:13px;color:#06101e;letter-spacing:-0.934px;">Edit</span>
<svg class="abs" style="left:172px;top:93px" width="19" height="19" viewBox="0 0 19 19" preserveAspectRatio="none"><g stroke="#fff" fill="none" stroke-width="1.3" stroke-linecap="round" stroke-linejoin="round"><path d="M1.2,8.8 A7.8,7.8 0 1 1 11.8,16.1"/><path d="M11,11.9 L11.5,16.5 L15.9,16.5"/><circle cx="9.1" cy="8.9" r="1.5"/></g></svg>
<svg class="abs" style="left:216px;top:93px" width="18" height="18" viewBox="0 0 18 18" preserveAspectRatio="none"><g stroke="#fff" fill="none" stroke-width="1.3" stroke-linecap="round" stroke-linejoin="round"><path d="M1.8,3.8 H16.2"/><path d="M6.6,3.6 A2.4,2.4 0 0 1 11.4,3.6"/><path d="M3.4,3.8 L4.6,15 A1.6,1.6 0 0 0 6.2,16.5 H11.8 A1.6,1.6 0 0 0 13.4,15 L14.6,3.8"/><path d="M7.6,7.2 V12.8 M10.4,7.2 V12.8"/></g></svg>
<svg class="abs" style="left:260px;top:94px" width="18" height="16" viewBox="0 0 18 16" preserveAspectRatio="none"><g stroke="#fff" fill="none" stroke-width="1.3" stroke-linecap="round" stroke-linejoin="round"><path d="M4.5,4.2 V2.6 A1.4,1.4 0 0 1 5.9,1.2 H12.1 A1.4,1.4 0 0 1 13.5,2.6 V4.2"/><path d="M4.5,12 H2.8 A1.6,1.6 0 0 1 1.2,10.4 V6 A1.8,1.8 0 0 1 3,4.2 H15 A1.8,1.8 0 0 1 16.8,6 V10.4 A1.6,1.6 0 0 1 15.2,12 H13.5"/><rect x="4.5" y="8.8" width="9" height="6" rx="1.2"/></g></svg>
<svg class="abs" style="left:304px;top:93px" width="18" height="17" viewBox="0 0 18 17" preserveAspectRatio="none"><g stroke="#fff" fill="none" stroke-width="1.3" stroke-linecap="round" stroke-linejoin="round"><path d="M7,2.5 H4 A2.2,2.2 0 0 0 1.8,4.7 V13 A2.2,2.2 0 0 0 4,15.2 H11.2 A2.2,2.2 0 0 0 13.4,13 V12"/><path d="M10.8,1.4 L16.6,6.2 L10.8,11 V8.4 C7.6,8.2 5.6,9.4 4.4,11.6 C4.6,7.4 7,4.6 10.8,4.2 Z"/></g></svg>
<svg class="abs" style="left:348px;top:94px" width="18" height="16" viewBox="0 0 18 16" preserveAspectRatio="none"><g stroke="#fff" fill="none" stroke-width="1.3" stroke-linecap="round" stroke-linejoin="round"><rect x="1.4" y="1.4" width="15.2" height="13.2" rx="2.2"/><path d="M7,5 L11.6,8 L7,11 Z"/></g></svg>
<div class="abs" style="left:391.8px;top:101.3px;width:3px;height:3px;border-radius:2px;background:#fff"></div><div class="abs" style="left:399.6px;top:101.3px;width:3px;height:3px;border-radius:2px;background:#fff"></div><div class="abs" style="left:407.4px;top:101.3px;width:3px;height:3px;border-radius:2px;background:#fff"></div>
<span class="t" style="left:726.0px;top:96.9px;font-size:12px;line-height:12px;color:#fff;letter-spacing:0.075px;">Mockup #41.png</span>
<svg class="abs" style="left:1089.5px;top:94.5px" width="17.5" height="15.5" viewBox="0 0 20 20" preserveAspectRatio="none"><defs><linearGradient id="cp1" x1="0" y1="0" x2="1" y2="1"><stop offset="0" stop-color="#2a8af0"/><stop offset="0.45" stop-color="#9a5cf0"/><stop offset="1" stop-color="#f0608a"/></linearGradient><linearGradient id="cp2" x1="0" y1="0" x2="0.8" y2="1"><stop offset="0" stop-color="#28b8e8"/><stop offset="0.4" stop-color="#4fd05a"/><stop offset="0.75" stop-color="#f6c02a"/><stop offset="1" stop-color="#f5703a"/></linearGradient><linearGradient id="cp3" x1="0" y1="0" x2="1" y2="1"><stop offset="0" stop-color="#c060f0"/><stop offset="0.6" stop-color="#f0609a"/><stop offset="1" stop-color="#f89a4a"/></linearGradient></defs><path d="M6.5,1.5 H12.5 C14.2,1.5 15.2,2.6 15.7,4 L18,11.5 C18.6,13.6 17.4,15.5 15.4,15.5 H12.6 L10.4,5.4 C10,3.6 9.2,3 7.8,3 Z" fill="url(#cp3)"/><path d="M6.5,1.5 H11.5 C10.4,2 9.8,3 9.4,4.4 L7.8,10 C7.4,11.4 6.6,12 5.4,12 H2.6 C2,10.6 2.2,9.4 2.6,8 L4,3.6 C4.4,2.3 5.2,1.5 6.5,1.5Z" fill="url(#cp1)"/><path d="M13.5,18.5 H7.5 C5.8,18.5 4.8,17.4 4.3,16 L2,8.5 C1.4,6.4 2.6,4.5 4.6,4.5 H7.4 L9.6,14.6 C10,16.4 10.8,17 12.2,17 Z" fill="url(#cp2)"/><path d="M10.8,6.6 L12,12 C11.4,13 10.4,13.4 9.2,13.4 L8,8 C8.6,7 9.6,6.6 10.8,6.6Z" fill="#15101c"/></svg>
<svg class="abs" style="left:1135px;top:95px" width="14.5" height="14" viewBox="0 0 19 19" preserveAspectRatio="none"><defs><linearGradient id="ph1" x1="0" y1="0" x2="1" y2="1"><stop offset="0" stop-color="#2f8fe8"/><stop offset="1" stop-color="#6a4fd0"/></linearGradient></defs><rect x="0.5" y="0.5" width="18" height="18" rx="3" fill="url(#ph1)"/><path d="M0.5,15 L10,5.5 L18.5,14 V16 A2.5,2.5 0 0 1 16,18.5 H3 A2.5,2.5 0 0 1 0.5,16Z" fill="#4ab4f4"/><path d="M0.5,17.2 L11.5,7 L18.5,13.5 V16 A2.5,2.5 0 0 1 16,18.5 H3 C1.6,18.5 0.8,18 0.5,17.2Z" fill="#2a8fe0"/><path d="M1,16.5 L10,7.6 L11.6,9 L3,18.4 C1.8,18.3 1.2,17.6 1,16.5Z" fill="#7fd4fa"/><circle cx="14.2" cy="4.6" r="1.9" fill="#fff"/></svg>
<svg class="abs" style="left:1179.5px;top:95px" width="15.5" height="16.5" viewBox="0 0 19 21" preserveAspectRatio="none"><defs><linearGradient id="ds1" x1="0" y1="0" x2="1" y2="0.9"><stop offset="0" stop-color="#ff9a3a"/><stop offset="0.45" stop-color="#f8508a"/><stop offset="1" stop-color="#b04af0"/></linearGradient><linearGradient id="ds2" x1="0" y1="0" x2="1" y2="1"><stop offset="0" stop-color="#3a6af8"/><stop offset="1" stop-color="#9a4af0"/></linearGradient></defs><path d="M1,1 C8,0 17.5,3 17.5,10.5 C17.5,15 14,19 8,19.5 C11,16 12,13 9.5,10.5 C6,9.6 2.6,6.5 1,1Z" fill="url(#ds1)"/><path d="M1.5,18 C2.5,14 5.6,11.4 10,10.6 C14,11.6 14,17 9,19.6 C6,20 1,20.4 1.5,18Z" fill="url(#ds2)"/></svg>
<svg class="abs" style="left:1221.5px;top:94.5px" width="17.5" height="15.5" viewBox="0 0 20 19" preserveAspectRatio="none"><defs><linearGradient id="cc1" x1="0" y1="0" x2="0.3" y2="1"><stop offset="0" stop-color="#e0a8fa"/><stop offset="0.55" stop-color="#b45cf0"/><stop offset="1" stop-color="#6a34d8"/></linearGradient></defs><path d="M1,5.5 L17,0.6 L18.4,4.6 L2,9Z" fill="#7a44e4"/><path d="M12.5,2 L15.6,1 L14.5,4.4 L11.6,5.2Z" fill="#a880f0"/><rect x="1" y="6.5" width="18" height="11.5" rx="1.6" fill="url(#cc1)"/><rect x="1" y="14.6" width="18" height="3.4" rx="1" fill="#4a3cc8" opacity="0.75"/></svg>
<svg class="abs" style="left:1264px;top:94.5px" width="24" height="17" viewBox="0 0 24 17" preserveAspectRatio="none"><path d="M6,15.5 A4.4,4.4 0 0 1 5.6,6.8 A6,6 0 0 1 16.4,5.2 A5.2,5.2 0 0 1 19.6,15.5 Z" fill="#1870c8"/><path d="M8,15.5 A4,4 0 0 1 8.6,8 A5.4,5.4 0 0 1 16.8,6.4 A4.8,4.8 0 0 1 19.6,15.5Z" fill="#2f98ea"/><path d="M3,0.5 L18.5,17" stroke="#202020" stroke-width="3.6"/><path d="M3,0.5 L18.5,17" stroke="#c8a070" stroke-width="1.2"/></svg>
<div class="abs" style="left:1304px;top:86px;width:1px;height:32px;background:#343434"></div>
<div class="abs" style="left:1330px;top:101.5px;width:10px;height:1.2px;background:#fff"></div>
<div class="abs" style="left:1378px;top:96.5px;width:8.6px;height:8.6px;border:1.2px solid #fff;border-radius:1.5px"></div>
<svg class="abs" style="left:1425px;top:96px" width="12" height="12" viewBox="0 0 12 12" preserveAspectRatio="none"><path d="M1,1 L11,11 M11,1 L1,11" stroke="#fff" stroke-width="1.2"/></svg>
<svg class="abs" style="left:103.6px;top:828.6px" width="16.8" height="12.8" viewBox="0 0 18 14" preserveAspectRatio="none"><g stroke="#fff" fill="none" stroke-width="1.3" stroke-linecap="round" stroke-linejoin="round"><rect x="0.9" y="0.9" width="16.2" height="12" rx="2.2"/><path d="M1,9 H17"/><path d="M4.2,9.4 V12.6 M7.4,9.4 V12.6 M10.6,9.4 V12.6 M13.8,9.4 V12.6" stroke-width="1"/></g></svg>
<div class="abs" style="left:142px;top:816px;width:1px;height:35px;background:#3a3a3a"></div>
<svg class="abs" style="left:162px;top:828px" width="18" height="15" viewBox="0 0 18 15" preserveAspectRatio="none"><g stroke="#8f8f8f" fill="none" stroke-width="1.3" stroke-linecap="round" stroke-linejoin="round"><path d="M9,13.8 L2.4,7.4 A3.6,3.6 0 0 1 7.6,2.4 L9,3.8 L10.4,2.4 A3.6,3.6 0 0 1 15.6,7.4 Z"/></g></svg>
<svg class="abs" style="left:206px;top:826px" width="17" height="17" viewBox="0 0 17 17" preserveAspectRatio="none"><g stroke="#fff" fill="none" stroke-width="1.3" stroke-linecap="round" stroke-linejoin="round"><circle cx="8.5" cy="8.5" r="7.4"/><path d="M8.5,7.6 V12.2"/></g><circle cx="8.5" cy="5" r="0.95" fill="#fff"/></svg>
<svg class="abs" style="left:248px;top:830px" width="14" height="12" viewBox="0 0 14 12" preserveAspectRatio="none"><g stroke="#8f8f8f" fill="none" stroke-width="1.3" stroke-linecap="round" stroke-linejoin="round"><path d="M4,10.4 H2.2 A1.2,1.2 0 0 1 1,9.2 V2.2 A1.2,1.2 0 0 1 2.2,1 H8.8 A1.2,1.2 0 0 1 10,2.2 V4"/><rect x="4.6" y="5.4" width="8.2" height="5.4" rx="1"/></g></svg>
<span class="t" style="left:272.2px;top:829.1px;font-size:14px;line-height:14px;color:#9b9b9b;letter-spacing:-0.327px;">2000 x 1334</span>
<svg class="abs" style="left:358px;top:830px" width="13" height="13" viewBox="0 0 13 13" preserveAspectRatio="none"><g stroke="#8f8f8f" fill="none" stroke-width="1.3" stroke-linecap="round" stroke-linejoin="round"><path d="M1,2.4 A1.4,1.4 0 0 1 2.4,1 H9.4 L12,3.6 V10.6 A1.4,1.4 0 0 1 10.6,12 H2.4 A1.4,1.4 0 0 1 1,10.6 Z"/><path d="M3.6,1.2 V4.2 H8.4 V1.2 M3.4,12 V7.6 H9.6 V12"/></g></svg>
<span class="t" style="left:382.3px;top:829.1px;font-size:14px;line-height:14px;color:#9b9b9b;letter-spacing:-0.765px;">285 KB</span>
<svg class="abs" style="left:741.5px;top:827.5px" width="15" height="15" viewBox="0 0 15 15" preserveAspectRatio="none"><g stroke="#fff" fill="none" stroke-width="1.3" stroke-linecap="round" stroke-linejoin="round"><path d="M1,4.6 V3.2 A2.2,2.2 0 0 1 3.2,1 H4.6 M10.4,1 H11.8 A2.2,2.2 0 0 1 14,3.2 V4.6 M14,10.4 V11.8 A2.2,2.2 0 0 1 11.8,14 H10.4 M4.6,14 H3.2 A2.2,2.2 0 0 1 1,11.8 V10.4"/><rect x="6.2" y="6.4" width="3" height="3" rx="0.8"/></g><circle cx="4.3" cy="4.2" r="0.8" fill="#fff"/></svg>
<svg class="abs" style="left:785.5px;top:827.5px" width="15" height="15" viewBox="0 0 15 15" preserveAspectRatio="none"><g stroke="#fff" fill="none" stroke-width="1.3" stroke-linecap="round" stroke-linejoin="round"><path d="M1,4.6 V3.2 A2.2,2.2 0 0 1 3.2,1 H4.6 M10.4,1 H11.8 A2.2,2.2 0 0 1 14,3.2 V4.6 M14,10.4 V11.8 A2.2,2.2 0 0 1 11.8,14 H10.4 M4.6,14 H3.2 A2.2,2.2 0 0 1 1,11.8 V10.4"/><path d="M4,5 H11 M4,7.6 H11 M4,10.2 H8.4" stroke-width="1.1"/></g></svg>
<svg class="abs" style="left:1050.5px;top:828.5px" width="18" height="14" viewBox="0 0 18 14" preserveAspectRatio="none"><g stroke="#fff" fill="none" stroke-width="1.3" stroke-linecap="round" stroke-linejoin="round"><rect x="0.8" y="0.8" width="16.4" height="12.4" rx="1"/></g><path d="M3.4,5.4 V3.4 H5.4 M12.6,3.4 H14.6 V5.4 M14.6,8.6 V10.6 H12.6 M5.4,10.6 H3.4 V8.6" stroke="#fff" stroke-width="1" fill="none"/><rect x="6" y="4.2" width="6" height="5.6" rx="2.2" fill="#fff"/></svg>
<div class="abs" style="left:1081px;top:819px;width:86px;height:32px;border-radius:4px;background:#303030;border:1px solid #2c2c2c;box-sizing:border-box"></div>
<span class="t" style="left:1093.0px;top:828.4px;font-size:14px;line-height:14px;color:#fff;letter-spacing:-1.010px;">51%</span>
<svg class="abs" style="left:1143px;top:832px" width="10" height="7" viewBox="0 0 10 7" preserveAspectRatio="none"><path d="M1,1.2 L5,5.2 L9,1.2" stroke="#cfcfcf" stroke-width="1.1" fill="none" stroke-linecap="round"/></svg>
<svg class="abs" style="left:1181px;top:827px" width="17" height="17" viewBox="0 0 17 17" preserveAspectRatio="none"><g stroke="#fff" fill="none" stroke-width="1.3" stroke-linecap="round" stroke-linejoin="round"><circle cx="7" cy="7" r="5.6"/><path d="M11.2,11.2 L15.8,15.8"/><path d="M4.4,7 H9.6"/></g></svg>
<div class="abs" style="left:1214px;top:833px;width:130px;height:4px;border-radius:2px;background:#9a9a9a"></div>
<div class="abs" style="left:1214px;top:833px;width:16px;height:4px;border-radius:2px;background:#79bcf0"></div>
<div class="abs" style="left:1220px;top:825px;width:20px;height:20px;border-radius:10px;background:#454545"></div>
<div class="abs" style="left:1224.4px;top:829.4px;width:11.2px;height:11.2px;border-radius:6px;background:#79bcf0"></div>
<svg class="abs" style="left:1359px;top:827px" width="17" height="17" viewBox="0 0 17 17" preserveAspectRatio="none"><g stroke="#fff" fill="none" stroke-width="1.3" stroke-linecap="round" stroke-linejoin="round"><circle cx="7" cy="7" r="5.6"/><path d="M11.2,11.2 L15.8,15.8"/><path d="M4.4,7 H9.6 M7,4.4 V9.6"/></g></svg>
<div class="abs" style="left:1398px;top:816px;width:1px;height:35px;background:#3a3a3a"></div>
<svg class="abs" style="left:1420px;top:826px" width="18" height="18" viewBox="0 0 18 18" preserveAspectRatio="none"><g stroke="#fff" fill="none" stroke-width="1.3" stroke-linecap="round" stroke-linejoin="round"><path d="M2.4,15.6 L15.6,2.4 M9.8,2.2 H15.8 V8.2 M2.2,9.8 V15.8 H8.2"/></g></svg>
<div class="abs" style="left:1846px;top:0;width:74px;height:1080px;background:#252525"></div>
<div class="abs" style="left:1846px;top:325px;width:74px;height:46px;background:#4c4c4c"></div>
<div class="abs" style="left:1916.5px;top:48px;width:3.5px;height:36px;background:#76b9ed"></div>
<div class="abs" style="left:1916.5px;top:94px;width:3.5px;height:37px;background:#76b9ed"></div>
<div class="abs" style="left:1916.5px;top:140px;width:3.5px;height:38px;background:#76b9ed"></div>
<div class="abs" style="left:1916.5px;top:188px;width:3.5px;height:37px;background:#76b9ed"></div>
<div class="abs" style="left:1916.5px;top:235px;width:3.5px;height:38px;background:#76b9ed"></div>
<div class="abs" style="left:1916.5px;top:282.5px;width:3.5px;height:37.5px;background:#76b9ed"></div>
<div class="abs" style="left:1916.5px;top:376px;width:3.5px;height:37px;background:#76b9ed"></div>
<div class="abs" style="left:1916px;top:325px;width:4px;height:46px;background:#8cc6f2"></div>
<svg class="abs" style="left:1874px;top:11px" width="18" height="18" viewBox="0 0 18 18"><path d="M0,2.6 L7.6,1.5 V8.4 H0Z M8.6,1.4 L18,0 V8.4 H8.6Z M0,9.4 H7.6 V16.4 L0,15.3Z M8.6,9.4 H18 V18 L8.6,16.6Z" fill="#fff"/></svg>
<svg class="abs" style="left:1871px;top:55px" width="24" height="22" viewBox="0 0 24 22"><path d="M1,3.5 A1,1 0 0 1 2,2.5 H9 L11,4.5 H22 A1,1 0 0 1 23,5.5 V18 H1Z" fill="#f0b93a"/><path d="M1,7.5 H23 V19 A1,1 0 0 1 22,20 H2 A1,1 0 0 1 1,19Z" fill="#fcd462"/><path d="M6,13 H18 V20 H15 V16 H9 V20 H6Z" fill="#2f8fe0"/><rect x="9" y="16" width="6" height="4" fill="#7cc4f8"/></svg>
<svg class="abs" style="left:1872px;top:101px" width="22" height="24" viewBox="0 0 22 24"><rect x="0.5" y="1.5" width="17" height="21" fill="#f4f4f4" stroke="#b8b8b8"/><path d="M0.5,14 H17.5 V22.5 H0.5Z" fill="#5bbd3a"/><path d="M0.5,17 H17.5 V22.5 H0.5Z" fill="#3e9a28"/><path d="M3,5 H14" stroke="#bbb" stroke-width="1"/><path d="M7,8 V15 M9,8 V15 M11,11 H14" stroke="#222" stroke-width="1.2"/><path d="M20.5,0.5 L12,14 L11,17 L13.6,15 L21.8,1.6Z" fill="#e9b63a" stroke="#a87914" stroke-width="0.6"/></svg>
<svg class="abs" style="left:1871px;top:147px" width="24" height="25" viewBox="0 0 24 25"><defs><radialGradient id="ff1" cx="0.6" cy="0.25" r="0.9"><stop offset="0" stop-color="#ffdd3a"/><stop offset="0.45" stop-color="#ff8a1e"/><stop offset="0.85" stop-color="#f0325a"/><stop offset="1" stop-color="#c8208a"/></radialGradient><radialGradient id="ff2" cx="0.5" cy="0.4" r="0.6"><stop offset="0" stop-color="#9a5cf0"/><stop offset="1" stop-color="#4a2ab0"/></radialGradient></defs><path d="M12,1 C14,3 15,4 15.5,6 C17,4.5 17,3 17,2 C21,5 23.5,9 23,14.5 C22.4,20.5 17.5,24.5 12,24.5 C6,24.5 1,20 1,13.5 C1,10 2.2,7.5 4,5.5 C4,7 4.4,8 5,8.6 C6,5 8.5,2.5 12,1Z" fill="url(#ff1)"/><circle cx="12.5" cy="13.5" r="5.4" fill="url(#ff2)"/><path d="M7,12 C8,9.5 11,8.6 13,9.6 C11.6,9.8 10.8,10.6 10.6,11.6 C12,11.4 13.4,12 13.8,13 C12,12.6 9,13.6 7,12Z" fill="#ff9a2a"/></svg>
<svg class="abs" style="left:1870px;top:194px" width="26" height="26" viewBox="0 0 26 26"><circle cx="13" cy="13" r="12.5" fill="#0d0d12"/><path d="M6.5,10 C6.5,6.5 9,6 10.5,8.5 C12,11.5 14.5,16 19,17.5 C16,20.5 10.5,20.5 8,17 C6.8,15 6.5,12.5 6.5,10Z" fill="#fff"/><path d="M13,7.5 C14.5,5.5 17,5.5 18,7.5 C20.5,7 21.5,9.6 20,11.4 C19,13 17,14.2 15,14.6 C13,13 12,10 13,7.5Z" fill="#8a4ad0"/><path d="M15,9 C17,8.4 19.5,9 20,11.4 C19,13 17,14.2 15,14.6Z" fill="#5a3cc0"/></svg>
<svg class="abs" style="left:1870px;top:241px" width="26" height="26" viewBox="0 0 26 26"><circle cx="13" cy="13" r="12.5" fill="#100812"/><path d="M11,5.5 L16.5,8.6 V15 L11,18.2 L5.5,15 V8.6Z" stroke="#fff" stroke-width="1.5" fill="none"/><path d="M16,8 L21.5,11.2 V17.4 L16,20.6 L10.5,17.4 V11.2Z" stroke="#b04ab8" stroke-width="1.4" fill="none"/><path d="M8,9 L12.5,11.6 V17 L8,19.6 L3.5,17 V11.6Z" stroke="#9a3aa0" stroke-width="1.2" fill="none"/></svg>
<div class="abs" style="left:1872px;top:290px;width:22px;height:22px;border-radius:3px;background:#001e36"></div>
<span class="t" style="left:1876.0px;top:295.5px;font-size:13px;line-height:13px;color:#31a8ff;letter-spacing:-1.901px;font-weight:bold;">Ps</span>
<svg class="abs" style="left:1872px;top:337px" width="22" height="22" viewBox="0 0 22 22"><defs><linearGradient id="tp1" x1="0" y1="0" x2="1" y2="1"><stop offset="0" stop-color="#2f8fe8"/><stop offset="1" stop-color="#5b54d6"/></linearGradient></defs><rect x="0.5" y="0.5" width="21" height="21" rx="3.5" fill="url(#tp1)"/><path d="M0.5,17 L10,7 L21.5,18 V18.5 A3,3 0 0 1 18.5,21.5 H3.5 A3,3 0 0 1 0.5,18.5Z" fill="#5cc4f8"/><path d="M1,20 L12.5,9.5 L21.5,17 V18.5 A3,3 0 0 1 18.5,21.5 H3.5Z" fill="#2f9fea" opacity="0.85"/><circle cx="16" cy="5.6" r="1.9" fill="#e9f4ff"/></svg>
<svg class="abs" style="left:1870px;top:382px" width="26" height="26" viewBox="0 0 26 26"><path d="M12,6 C18,5 23,8.5 22.5,14 C22,19.5 16,23 10,22 C4,21 1,17 2,12.5 C3,8.5 7,6.6 12,6Z" fill="#e9edf2"/><path d="M12,6 C18,5 23,8.5 22.5,14 C22.3,16 21.5,17.6 20,19 C21,14 16,8.5 12,6Z" fill="#c6ccd6"/><circle cx="6.5" cy="13" r="1.8" fill="#e8453c"/><circle cx="10" cy="9.8" r="1.7" fill="#3dbb4a"/><circle cx="14.5" cy="9.6" r="1.7" fill="#f0a628"/><circle cx="8" cy="17.5" r="1.7" fill="#2f7fe0"/><circle cx="13" cy="17" r="1.6" fill="#2a2a2a"/><path d="M22.5,1 L24,2.2 L14.5,21 L12.5,22.5 L13,20Z" fill="#d89a4a"/><path d="M22.5,1 L24,2.2 L21.5,7 L19.8,6Z" fill="#b7783a"/></svg>
<svg class="abs" style="left:1858px;top:860px" width="9" height="14" viewBox="0 0 9 14"><path d="M7.6,1 L1.6,7 L7.6,13" stroke="#fff" stroke-width="1.3" fill="none"/></svg>
<svg class="abs" style="left:1855px;top:883px" width="18" height="17" viewBox="0 0 18 17"><path d="M14.5,9 V1 H1 V12.5 H9" stroke="#fff" stroke-width="1.3" fill="none"/><path d="M4,10 H9 M4,10 V6.6 M6.2,4 H11.2 V7" stroke="#fff" stroke-width="1.2" fill="none"/><circle cx="12.6" cy="12.6" r="3.6" fill="#f7941d"/></svg>
<svg class="abs" style="left:1878px;top:884px" width="18" height="13" viewBox="0 0 18 13"><rect x="4.6" y="3" width="11.6" height="7.6" rx="0.8" stroke="#fff" stroke-width="1.2" fill="none"/><rect x="6" y="4.4" width="8.8" height="4.8" fill="#fff"/><rect x="16.6" y="5.2" width="1.2" height="3.2" fill="#fff"/><path d="M0.6,2 V4 M3,2 V4" stroke="#fff" stroke-width="1"/><rect x="0" y="3.6" width="3.8" height="3" fill="#fff"/><path d="M1.8,6.6 V8.6 H4.6" stroke="#fff" stroke-width="1" fill="none"/></svg>
<svg class="abs" style="left:1905px;top:885px" width="15" height="15" viewBox="0 0 15 15"><g stroke="#fff" fill="none" stroke-width="1.4"><path d="M1.5,13 A11.5,11.5 0 0 1 13,1.5"/><path d="M4.8,13 A8.2,8.2 0 0 1 13,4.8" opacity="0.9"/><path d="M8,13 A5,5 0 0 1 13,8"/></g><circle cx="12" cy="12" r="1.5" fill="#fff"/></svg>
<svg class="abs" style="left:1855px;top:908px" width="18" height="15" viewBox="0 0 18 15"><path d="M1,5.2 H3.6 L7.4,1.6 V13.4 L3.6,9.8 H1Z" stroke="#fff" stroke-width="1.1" fill="none" stroke-linejoin="round"/><path d="M9.4,5.2 A3.4,3.4 0 0 1 9.4,9.8 M11.4,3.4 A6,6 0 0 1 11.4,11.6" stroke="#fff" stroke-width="1.1" fill="none"/><path d="M13.6,1.6 A8.6,8.6 0 0 1 13.6,13.4" stroke="#8a8a8a" stroke-width="1.1" fill="none"/></svg>
<span class="t" style="left:1871.6px;top:937.8px;font-size:12px;line-height:12px;color:#fff;letter-spacing:-2.052px;">ENG</span>
<span class="t" style="left:1862.0px;top:976.0px;font-size:12px;line-height:12px;color:#fff;letter-spacing:-0.448px;">2:35 PM</span>
<span class="t" style="left:1859.9px;top:992.8px;font-size:12px;line-height:12px;color:#fff;letter-spacing:-0.446px;">Thursday</span>
<span class="t" style="left:1857.0px;top:1009.8px;font-size:12px;line-height:12px;color:#fff;letter-spacing:-0.186px;">8/21/2025</span>
<svg class="abs" style="left:1874px;top:1042px" width="26" height="26" viewBox="0 0 26 26"><path d="M1,1 H17 V12.6 H9 L5.4,16 V12.6 H1Z" fill="#fff"/><path d="M3.6,4.2 H14.4 M3.6,6.8 H14.4 M3.6,9.4 H14.4" stroke="#252525" stroke-width="1"/><circle cx="16.4" cy="16" r="7.4" fill="#252525" stroke="#7a7a7a" stroke-width="1"/></svg>
<span class="t" style="left:1887.1px;top:1052.4px;font-size:12px;line-height:12px;color:#fff;letter-spacing:-0.000px;font-weight:bold;">1</span>
<div class="abs" style="left:1846px;top:1075px;width:74px;height:1px;background:#858585"></div>
</div>
</body></html>
